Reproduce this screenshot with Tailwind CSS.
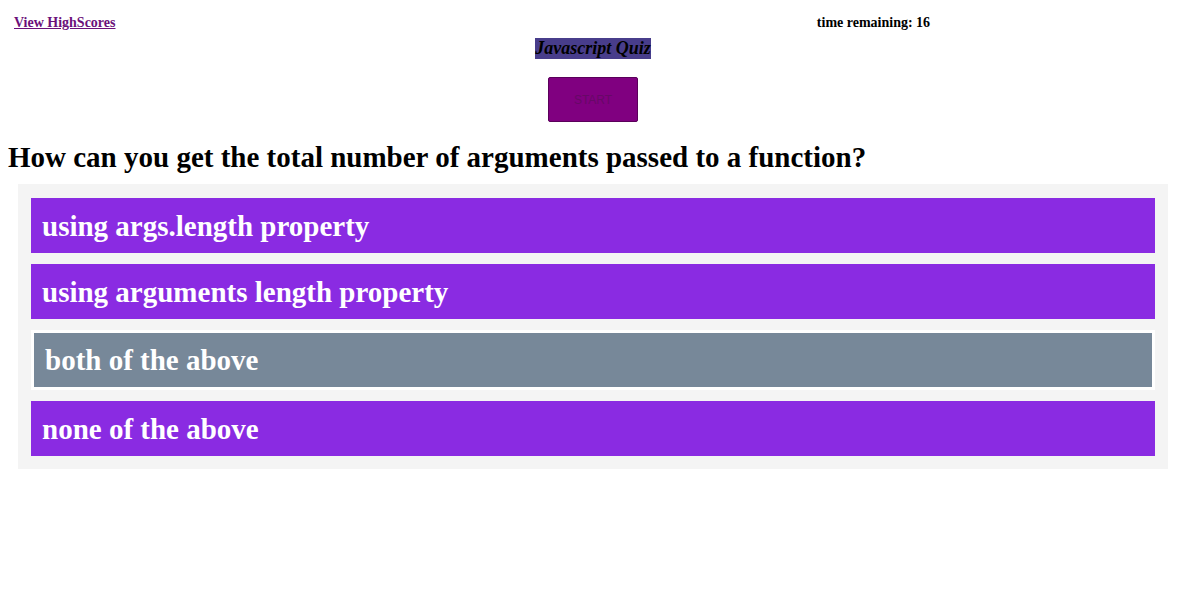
<!DOCTYPE html>
<html lang="en">
<head>
<meta charset="utf-8">
<meta name="viewport" content="width=device-width, initial-scale=1">
<title>Javascript Quiz</title>
<script src="https://cdn.jsdelivr.net/npm/@tailwindcss/browser@4"></script>
</head>
<body class="bg-white text-black font-['Liberation_Serif',serif] font-bold">
<header class="grid grid-cols-[1fr_31.5%] pt-[15px] pl-3.5 text-[14px] leading-4">
  <div><a href="#scores" class="text-[#6b0f7a] underline">View HighScores</a></div>
  <p>time remaining: <span>16</span></p>
</header>
<main>
  <div class="flex flex-col items-center pt-[7px]">
    <h1 class="bg-[#483d8b] text-[18px] leading-[21px] italic">Javascript Quiz</h1>
    <button type="button" disabled class="mt-[18px] h-[45px] w-[90px] rounded-xs border border-[#5a005a] bg-[#800080] font-['Liberation_Sans',sans-serif] text-[12px] font-normal text-[#670867]">START</button>
  </div>
  <h2 class="mt-[19px] px-2 text-[29px] leading-8">How can you get the total number of arguments passed to a function?</h2>
  <div class="mx-[18px] mt-[11px] flex flex-col gap-[11px] bg-[#f4f4f4] px-[13px] pt-3.5 pb-[13px] text-[29px] leading-[33px] text-white">
    <button type="button" class="bg-[#8a2be2] px-[11px] pt-3 pb-2.5 text-left">using args.length property</button>
    <button type="button" class="bg-[#8a2be2] px-[11px] pt-3 pb-2.5 text-left">using arguments length property</button>
    <button type="button" class="border-3 border-white bg-[#778899] px-[11px] pt-[11px] pb-2.5 text-left">both of the above</button>
    <button type="button" class="bg-[#8a2be2] px-[11px] pt-3 pb-2.5 text-left">none of the above</button>
  </div>
</main>
</body>
</html>
